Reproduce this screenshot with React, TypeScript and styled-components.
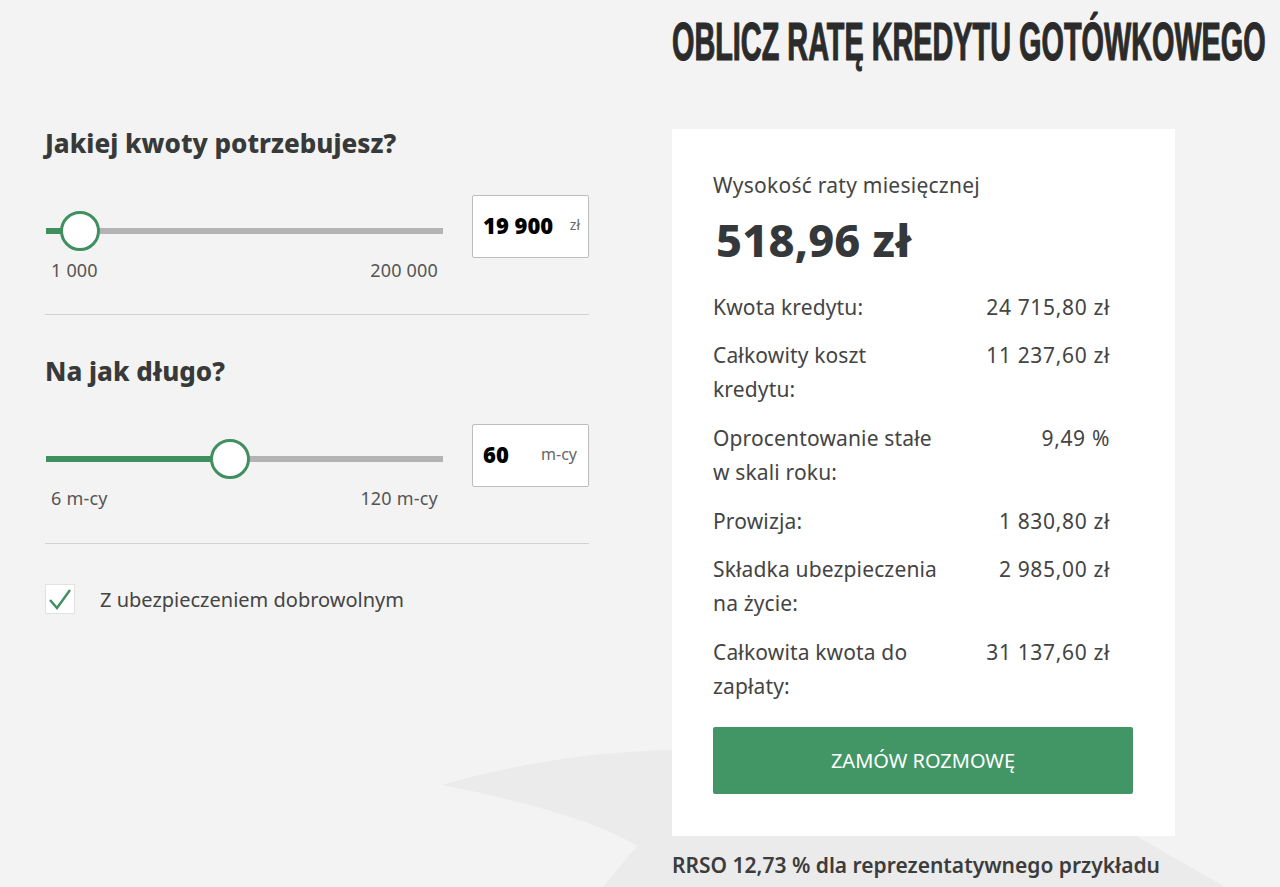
import { FunctionComponent } from "react";
import styled, { createGlobalStyle } from "styled-components";

const GlobalStyle = createGlobalStyle`
  html, body {
    margin: 0;
    padding: 0;
    height: 100%;
    overflow: hidden;
    background: #f3f3f3;
  }
  * { box-sizing: border-box; }
`;

const Page = styled.div`
  position: relative;
  width: 1280px;
  height: 887px;
  overflow: hidden;
  display: flex;
  padding-left: 45px;
  font-family: "Noto Sans", "Liberation Sans", sans-serif;
  color: #3c3c3c;
  background: #f3f3f3;
`;

const Swoosh = styled.svg`
  position: absolute;
  left: 0;
  top: 0;
  width: 1280px;
  height: 887px;
`;

const LeftColumn = styled.div`
  position: relative;
  width: 544px;
  padding-top: 124px;
`;

const RightColumn = styled.div`
  position: relative;
  margin-left: 83px;
  width: 608px;
`;

const TitleRow = styled.div`
  height: 129px;
  padding-top: 10px;
`;

const MainTitle = styled.h1`
  display: inline-block;
  margin: 0;
  font-family: "Liberation Sans", sans-serif;
  font-weight: 700;
  font-size: 53px;
  line-height: 64px;
  color: #2b2b2b;
  white-space: nowrap;
  -webkit-text-stroke: 1.2px #2b2b2b;
  transform: scaleX(0.544);
  transform-origin: left center;
`;

const ValueBox = styled.div`
  width: 117px;
  height: 63px;
  display: flex;
  justify-content: space-between;
  align-items: center;
  padding: 0 11px 4px 10px;
  background: #fff;
  border: 1px solid #bdbdbd;
  border-radius: 2px;
`;

const Section = styled.section`
  padding-bottom: 31px;
  margin-bottom: 37px;
  border-bottom: 1px solid #d2d2d2;

  & + & {
    padding-bottom: 32px;
  }

  & + & ${ValueBox} {
    margin-top: 1px;
  }
`;

const SectionTitle = styled.h2`
  margin: 0;
  font-size: 26px;
  line-height: 38px;
  font-weight: 800;
  color: #383a3a;
`;

const SliderRow = styled.div`
  display: flex;
  justify-content: space-between;
  align-items: flex-start;
  margin-top: 33px;
`;

const SliderColumn = styled.div`
  width: 398px;
`;

const Track = styled.div`
  position: relative;
  height: 6px;
  margin: 33px 0 0 1px;
  background: #b3b3b3;
`;

const TrackFill = styled.div`
  height: 100%;
  background: #3f8f5f;
`;

const Thumb = styled.div`
  position: absolute;
  top: -17px;
  width: 40px;
  height: 40px;
  margin-left: -20px;
  border-radius: 50%;
  border: 3.5px solid #3f8f5f;
  background: #fff;
`;

const Scale = styled.div`
  display: flex;
  justify-content: space-between;
  margin-top: 23px;
  padding: 0 5px 0 6px;
  font-size: 18px;
  line-height: 26px;
  letter-spacing: 0.2px;
  color: #555;
`;

const Value = styled.span`
  font-size: 22px;
  font-weight: 900;
  color: #000;
`;

const Unit = styled.span<{ $shift: number }>`
  margin-right: ${(p) => p.$shift}px;
  font-size: ${(p) => (p.$shift ? 14 : 16)}px;
  color: #666;
`;

const CheckRow = styled.div`
  display: flex;
  align-items: center;
  gap: 25px;
  font-size: 20px;
  margin-top: 40px;
  color: #444;
`;

const CheckBox = styled.div`
  width: 30px;
  height: 30px;
  display: flex;
  align-items: center;
  justify-content: center;
  background: #fff;
  border: 1px solid #e2e2e2;
`;

const Card = styled.div`
  width: 503px;
  height: 707px;
  padding: 41px 42px 0 41px;
  background: #fff;
`;

const CardLabel = styled.div`
  font-size: 21px;
  line-height: 30px;
  letter-spacing: 0.25px;
  color: #444;
`;

const Amount = styled.div`
  margin-top: 12px;
  padding-left: 3px;
  font-size: 45px;
  line-height: 56px;
  letter-spacing: 0.2px;
  font-weight: 800;
  color: #35383a;
`;

const Details = styled.div`
  margin-top: 21.6px;
`;

const DetailRow = styled.div`
  display: flex;
  justify-content: space-between;
  margin-bottom: 14px;
  padding-right: 23px;
  font-size: 21px;
  line-height: 34.4px;
  letter-spacing: 0.15px;
  color: #444;
`;

const DetailLabel = styled.div`
  width: 232px;
`;

const DetailValue = styled.span`
  letter-spacing: 0.65px;
`;

const OrderButton = styled.button`
  display: block;
  width: 420px;
  height: 67px;
  margin-top: 23.4px;
  border: 0;
  border-radius: 2px;
  background: #429666;
  color: #fff;
  font-family: inherit;
  font-size: 20px;
`;

const Footnote = styled.div`
  margin-top: 14px;
  font-size: 21px;
  line-height: 30px;
  font-weight: 600;
  color: #3c3c3c;
`;

type SliderProps = {
  title: string;
  percent: number;
  min: string;
  max: string;
  value: string;
  unit: string;
  unitShift: number;
};

const SliderSection: FunctionComponent<SliderProps> = ({ title, percent, min, max, value, unit, unitShift }) => (
  <Section>
    <SectionTitle>{title}</SectionTitle>
    <SliderRow>
      <SliderColumn>
        <Track>
          <TrackFill style={{ width: `${percent}%` }} />
          <Thumb style={{ left: `${percent}%` }} />
        </Track>
        <Scale>
          <span>{min}</span>
          <span>{max}</span>
        </Scale>
      </SliderColumn>
      <ValueBox>
        <Value>{value}</Value>
        <Unit $shift={unitShift}>{unit}</Unit>
      </ValueBox>
    </SliderRow>
  </Section>
);

const details: [string, string][] = [
  ["Kwota kredytu:", "24 715,80 zł"],
  ["Całkowity koszt kredytu:", "11 237,60 zł"],
  ["Oprocentowanie stałe w skali roku:", "9,49 %"],
  ["Prowizja:", "1 830,80 zł"],
  ["Składka ubezpieczenia na życie:", "2 985,00 zł"],
  ["Całkowita kwota do zapłaty:", "31 137,60 zł"],
];

const App: FunctionComponent = () => (
  <Page>
    <GlobalStyle />
    <Swoosh viewBox="0 0 1280 887">
      <path
        d="M442 785 C500 768 580 752 672 750 L1135 835 L1225 887 L603 887 L637 846 C600 822 520 800 442 785 Z"
        fill="#ebebeb"
      />
    </Swoosh>
    <LeftColumn>
      <SliderSection
        title="Jakiej kwoty potrzebujesz?"
        percent={8.6}
        min="1 000"
        max="200 000"
        value="19 900"
        unit="zł"
        unitShift={-3}
      />
      <SliderSection
        title="Na jak długo?"
        percent={46.3}
        min="6 m-cy"
        max="120 m-cy"
        value="60"
        unit="m-cy"
        unitShift={0}
      />
      <CheckRow>
        <CheckBox>
          <svg width="24" height="24" viewBox="0 0 24 24" fill="none">
            <path d="M2 13 L9 21 L22 3" stroke="#3f8f5f" strokeWidth="2.4" />
          </svg>
        </CheckBox>
        Z ubezpieczeniem dobrowolnym
      </CheckRow>
    </LeftColumn>
    <RightColumn>
      <TitleRow>
        <MainTitle>OBLICZ RATĘ KREDYTU GOTÓWKOWEGO</MainTitle>
      </TitleRow>
      <Card>
        <CardLabel>Wysokość raty miesięcznej</CardLabel>
        <Amount>518,96 zł</Amount>
        <Details>
          {details.map(([label, value]) => (
            <DetailRow key={label}>
              <DetailLabel>{label}</DetailLabel>
              <DetailValue>{value}</DetailValue>
            </DetailRow>
          ))}
        </Details>
        <OrderButton>ZAMÓW ROZMOWĘ</OrderButton>
      </Card>
      <Footnote>RRSO 12,73 % dla reprezentatywnego przykładu</Footnote>
    </RightColumn>
  </Page>
);

export default App;
